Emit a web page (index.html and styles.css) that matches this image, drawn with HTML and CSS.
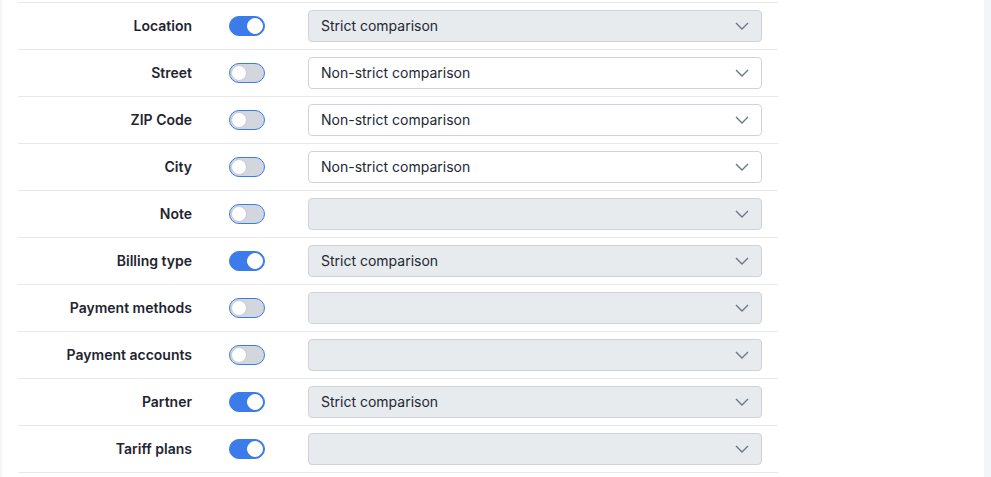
FILE: index.html
```html
<!DOCTYPE html>
<html>
<head>
<meta charset="utf-8">
<link rel="stylesheet" href="styles.css">
</head>
<body>
<div class="page">
  <div class="content">
    <div class="rows">
      <div class="row"><div class="label">Location</div><div class="toggle on"><span class="knob"></span></div><div class="select disabled"><span class="val">Strict comparison</span><svg class="chev" viewBox="0 0 14 8" width="14" height="8"><path d="M1 1l6 6 6-6" fill="none" stroke="#6b7789" stroke-width="1.4"/></svg></div></div>
      <div class="row"><div class="label">Street</div><div class="toggle"><span class="knob"></span></div><div class="select"><span class="val">Non-strict comparison</span><svg class="chev" viewBox="0 0 14 8" width="14" height="8"><path d="M1 1l6 6 6-6" fill="none" stroke="#6b7789" stroke-width="1.4"/></svg></div></div>
      <div class="row"><div class="label">ZIP Code</div><div class="toggle"><span class="knob"></span></div><div class="select"><span class="val">Non-strict comparison</span><svg class="chev" viewBox="0 0 14 8" width="14" height="8"><path d="M1 1l6 6 6-6" fill="none" stroke="#6b7789" stroke-width="1.4"/></svg></div></div>
      <div class="row"><div class="label">City</div><div class="toggle"><span class="knob"></span></div><div class="select"><span class="val">Non-strict comparison</span><svg class="chev" viewBox="0 0 14 8" width="14" height="8"><path d="M1 1l6 6 6-6" fill="none" stroke="#6b7789" stroke-width="1.4"/></svg></div></div>
      <div class="row"><div class="label">Note</div><div class="toggle"><span class="knob"></span></div><div class="select disabled"><span class="val"></span><svg class="chev" viewBox="0 0 14 8" width="14" height="8"><path d="M1 1l6 6 6-6" fill="none" stroke="#6b7789" stroke-width="1.4"/></svg></div></div>
      <div class="row"><div class="label">Billing type</div><div class="toggle on"><span class="knob"></span></div><div class="select disabled"><span class="val">Strict comparison</span><svg class="chev" viewBox="0 0 14 8" width="14" height="8"><path d="M1 1l6 6 6-6" fill="none" stroke="#6b7789" stroke-width="1.4"/></svg></div></div>
      <div class="row"><div class="label">Payment methods</div><div class="toggle"><span class="knob"></span></div><div class="select disabled"><span class="val"></span><svg class="chev" viewBox="0 0 14 8" width="14" height="8"><path d="M1 1l6 6 6-6" fill="none" stroke="#6b7789" stroke-width="1.4"/></svg></div></div>
      <div class="row"><div class="label">Payment accounts</div><div class="toggle"><span class="knob"></span></div><div class="select disabled"><span class="val"></span><svg class="chev" viewBox="0 0 14 8" width="14" height="8"><path d="M1 1l6 6 6-6" fill="none" stroke="#6b7789" stroke-width="1.4"/></svg></div></div>
      <div class="row"><div class="label">Partner</div><div class="toggle on"><span class="knob"></span></div><div class="select disabled"><span class="val">Strict comparison</span><svg class="chev" viewBox="0 0 14 8" width="14" height="8"><path d="M1 1l6 6 6-6" fill="none" stroke="#6b7789" stroke-width="1.4"/></svg></div></div>
      <div class="row"><div class="label">Tariff plans</div><div class="toggle on"><span class="knob"></span></div><div class="select disabled"><span class="val"></span><svg class="chev" viewBox="0 0 14 8" width="14" height="8"><path d="M1 1l6 6 6-6" fill="none" stroke="#6b7789" stroke-width="1.4"/></svg></div></div>
    </div>
  </div>
</div>
</body>
</html>
```
FILE: styles.css
```css
html, body {
  margin: 0;
  padding: 0;
  background: #f4f5f9;
  font-family: Inter, "Noto Sans", sans-serif;
  font-size: 14px;
  color: #1f2530;
}
.page {
  display: flex;
  height: 477px;
  overflow: hidden;
}
.content {
  margin-left: 2px;
  width: 982px;
  background: #ffffff;
  padding: 2px 0 0 16px;
  box-sizing: border-box;
}
.rows {
  width: 760px;
  border-top: 1px solid #e6e8ec;
}
.row {
  display: grid;
  grid-template-columns: 174px 36px 1fr;
  column-gap: 37px;
  align-items: center;
  height: 46px;
  padding-right: 16px;
  border-bottom: 1px solid #e6e8ec;
}
.row .select { margin-left: 6px; }
.label {
  text-align: right;
  font-weight: 600;
  color: #1f2530;
  padding-bottom: 2px;
}
.toggle {
  width: 36px;
  height: 20px;
  box-sizing: border-box;
  border-radius: 10px;
  border: 1px solid #3c7bea;
  background: #d3d6dc;
  position: relative;
}
.toggle .knob {
  position: absolute;
  top: 1px;
  left: 1px;
  width: 16px;
  height: 16px;
  box-sizing: border-box;
  border-radius: 50%;
  background: #ffffff;
  border: 1px solid #c9ccd2;
}
.toggle.on {
  background: #3c7bea;
}
.toggle.on .knob {
  left: 17px;
  border-color: #ffffff;
}
.select {
  height: 32px;
  box-sizing: border-box;
  border: 1px solid #cfd3d9;
  border-radius: 4px;
  background: #ffffff;
  display: flex;
  align-items: center;
  justify-content: space-between;
  padding: 0 12px 0 12px;
  color: #212834;
}
.select .val {
  padding-bottom: 2px;
}
.select.disabled {
  background: #e8ebee;
}
.chev {
  display: block;
}
```
